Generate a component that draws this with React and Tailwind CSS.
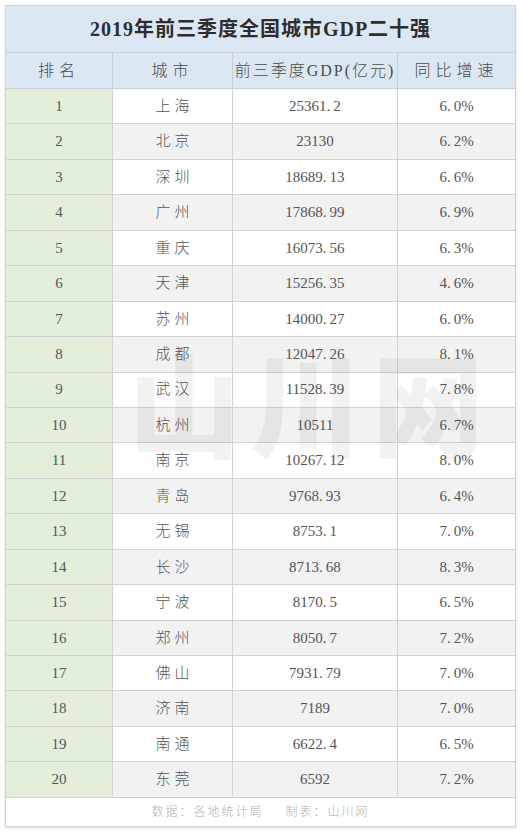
const rows = [
  ["1", "上海", "25361.2", "6.0%"],
  ["2", "北京", "23130", "6.2%"],
  ["3", "深圳", "18689.13", "6.6%"],
  ["4", "广州", "17868.99", "6.9%"],
  ["5", "重庆", "16073.56", "6.3%"],
  ["6", "天津", "15256.35", "4.6%"],
  ["7", "苏州", "14000.27", "6.0%"],
  ["8", "成都", "12047.26", "8.1%"],
  ["9", "武汉", "11528.39", "7.8%"],
  ["10", "杭州", "10511", "6.7%"],
  ["11", "南京", "10267.12", "8.0%"],
  ["12", "青岛", "9768.93", "6.4%"],
  ["13", "无锡", "8753.1", "7.0%"],
  ["14", "长沙", "8713.68", "8.3%"],
  ["15", "宁波", "8170.5", "6.5%"],
  ["16", "郑州", "8050.7", "7.2%"],
  ["17", "佛山", "7931.79", "7.0%"],
  ["18", "济南", "7189", "7.0%"],
  ["19", "南通", "6622.4", "6.5%"],
  ["20", "东莞", "6592", "7.2%"],
];

// numbers in the picture have the wide songti dot, fake it with a thin space
const num = (s) => s.replace(".", ".\u2009");

const font = { fontFamily: '"Liberation Serif", "Noto Sans CJK SC", serif' };

export default function App() {
  return (
    <div className="w-[524px] h-[833px] bg-white pt-[5px] px-[5px]" style={font}>
      <div className="relative w-[511px] border border-[#cfd3d6] shadow-[0_1px_2px_rgba(0,0,0,0.15)]">
        {/* title */}
        <div className="h-[47px] bg-[#dce7f4] border-b border-[#c9d2dc] flex items-center justify-center text-[20px] font-bold text-[#2e2e2e] tracking-[1px]">
          2019年前三季度全国城市GDP二十强
        </div>

        {/* header */}
        <div className="grid grid-cols-[107px_120px_165px_117px] h-[36px] bg-[#dce7f4] border-b border-[#c9cfd6] text-[16px] font-light text-[#4a4a4a]">
          <div className="flex items-center justify-center border-r border-[#c9cfd6] tracking-[5px]">排名</div>
          <div className="flex items-center justify-center border-r border-[#c9cfd6] tracking-[5px]">城市</div>
          <div className="flex items-center justify-center border-r border-[#c9cfd6] tracking-[2px]">前三季度GDP(亿元)</div>
          <div className="flex items-center justify-center tracking-[5px]">同比增速</div>
        </div>

        {/* data rows */}
        {rows.map((r, i) => (
          <div
            key={r[0]}
            className={`grid grid-cols-[107px_120px_165px_117px] h-[35.45px] border-b border-[#d2d2d2] text-[15px] font-light text-[#555] ${
              i % 2 === 1 ? "bg-[#f2f2f2]" : "bg-white"
            }`}
          >
            <div className="flex items-center justify-center bg-[#e3efda] border-r border-[#d2d2d2]">{r[0]}</div>
            <div className="flex items-center justify-center border-r border-[#d2d2d2] tracking-[4px] pl-[4px]">{r[1]}</div>
            <div className="flex items-center justify-center border-r border-[#d2d2d2]">{num(r[2])}</div>
            <div className="flex items-center justify-center">{num(r[3])}</div>
          </div>
        ))}

        {/* footer */}
        <div className="h-[28px] bg-white flex items-center justify-center text-[12px] font-light text-[#b0b0b0] tracking-[2px]">
          <span>数据：各地统计局</span>
          <span className="ml-[22px]">制表：山川网</span>
        </div>

        {/* watermark */}
        <div
          className="absolute left-[122px] top-[338px] pointer-events-none text-[112px] font-black text-[rgba(0,0,0,0.05)] tracking-[10px] leading-none"
          style={{ fontFamily: '"Noto Sans CJK SC", sans-serif' }}
        >
          山川网
        </div>
      </div>
    </div>
  );
}
